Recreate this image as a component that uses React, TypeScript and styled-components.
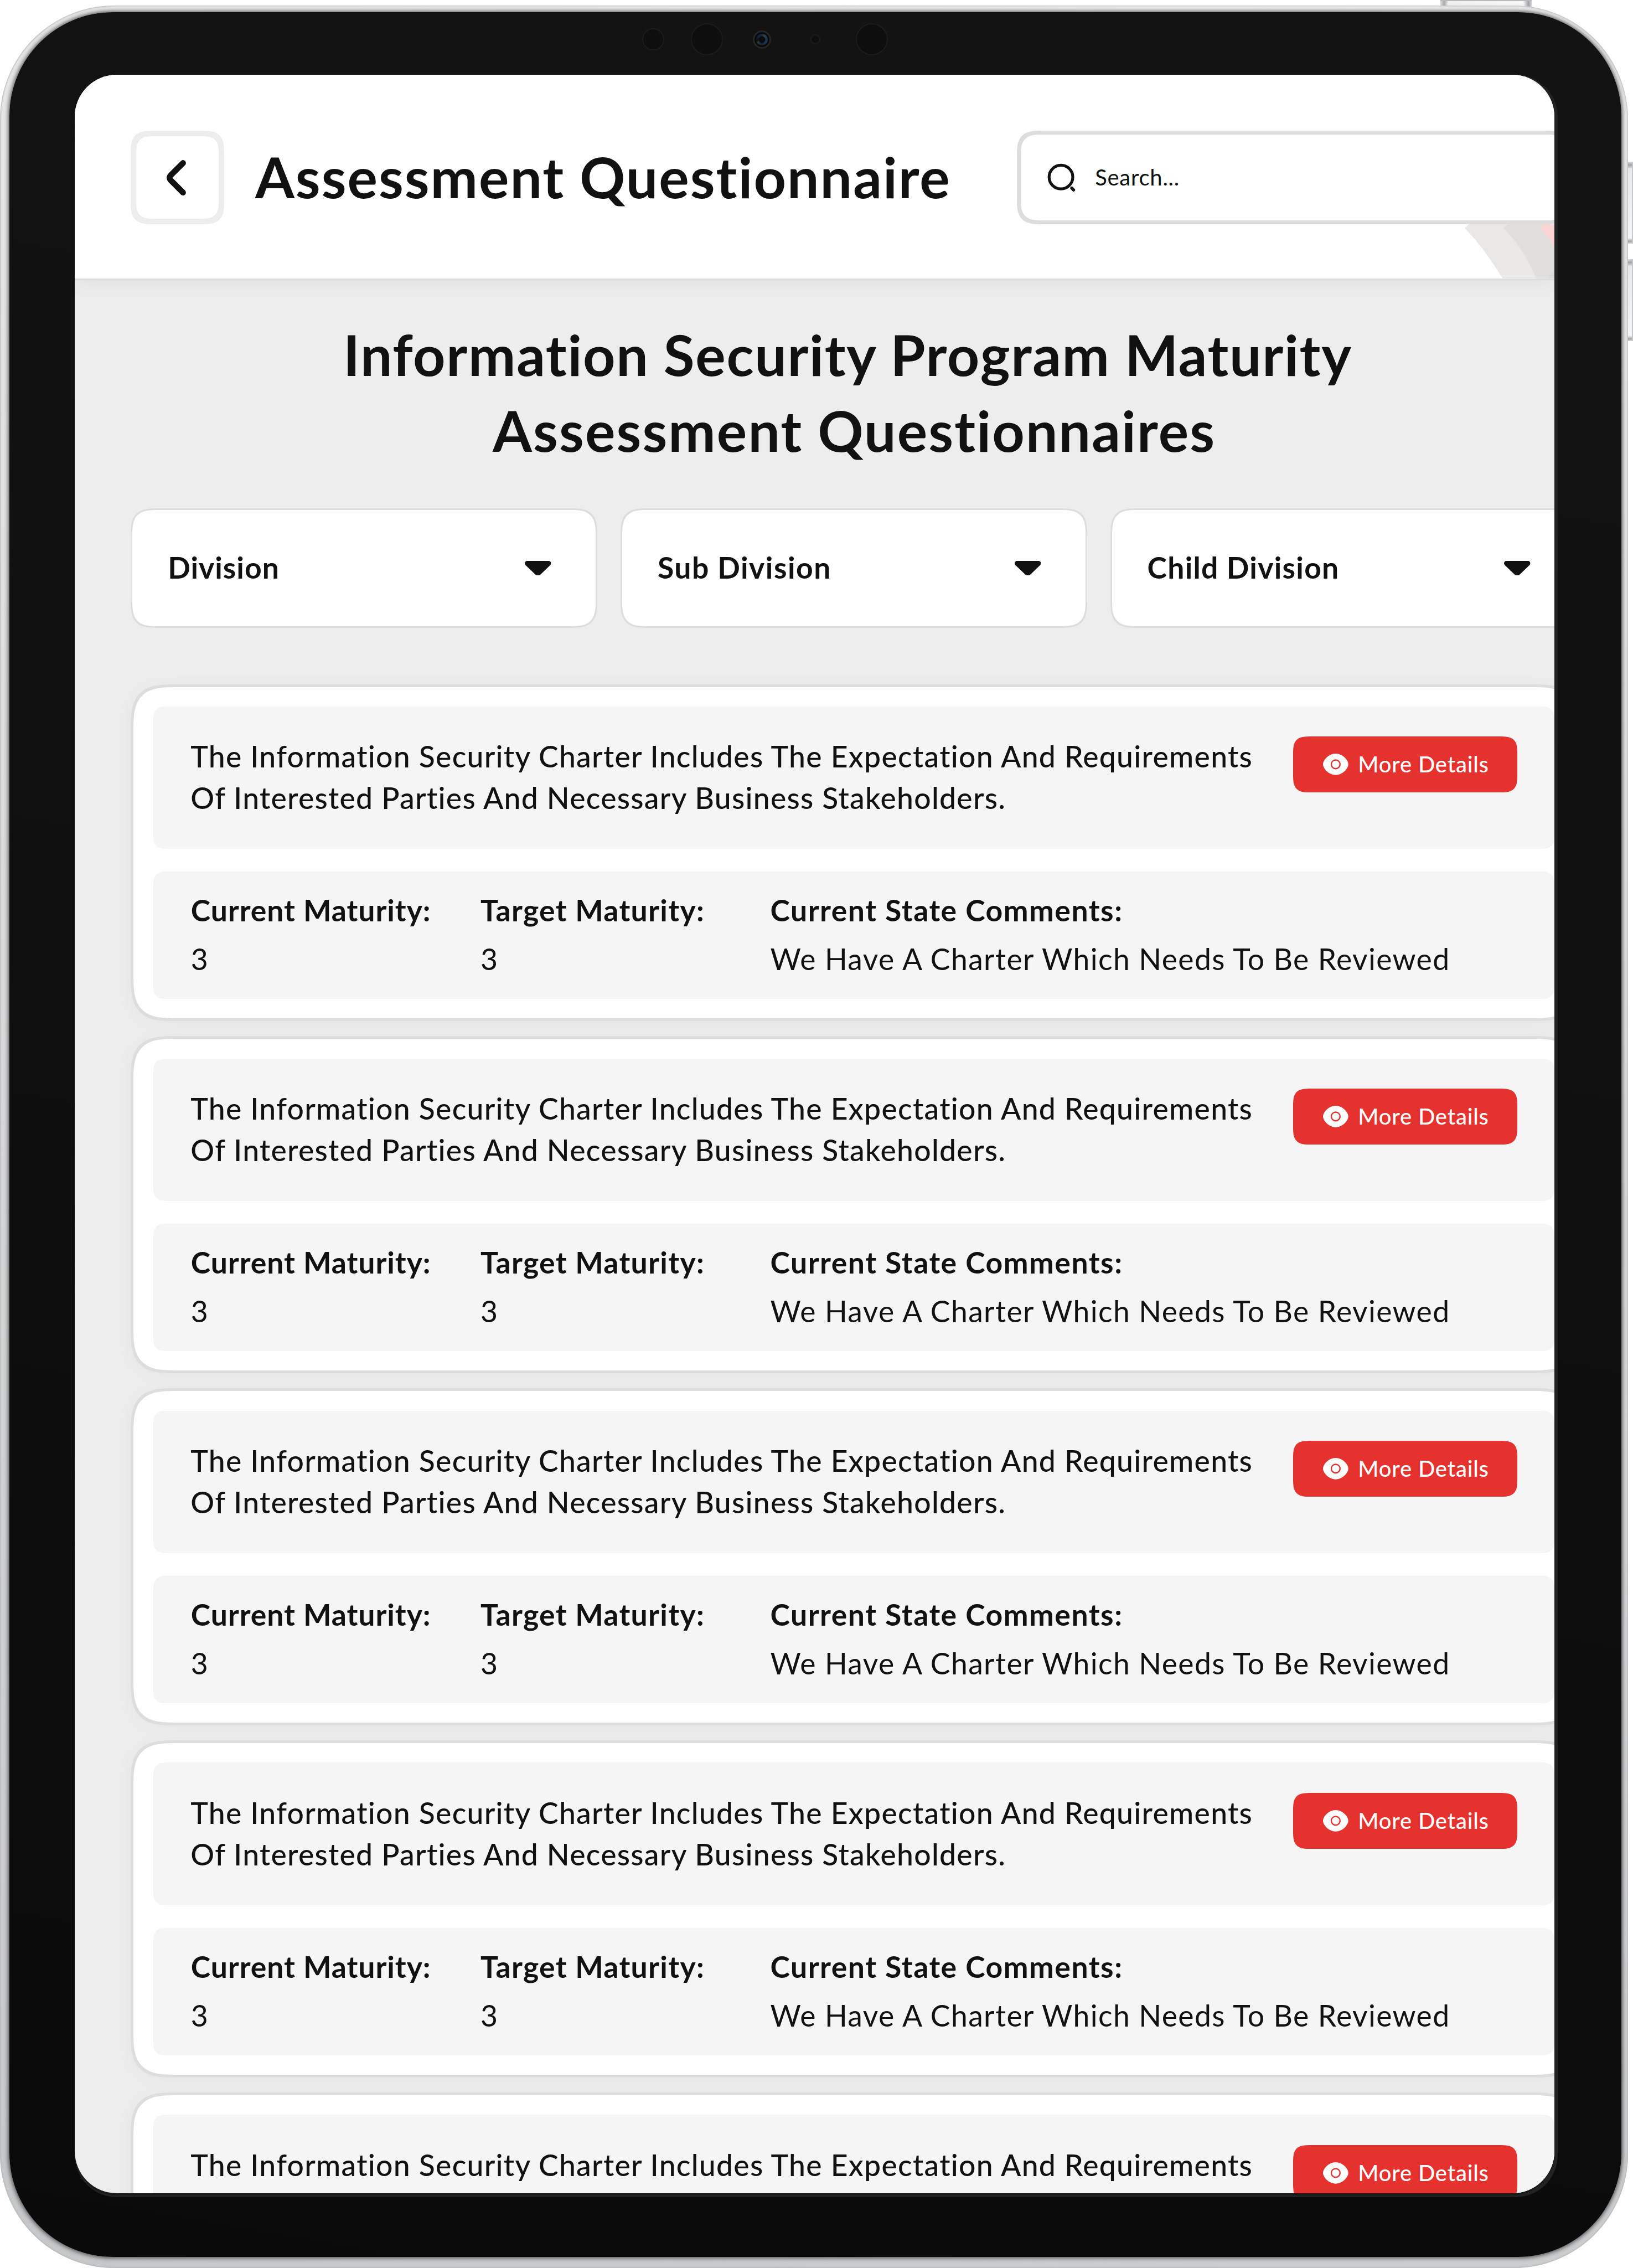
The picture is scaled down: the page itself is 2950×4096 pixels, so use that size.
import React from 'react';
import styled, { createGlobalStyle } from 'styled-components';

const ink = '#111111';
const line = '#dddddd';

const GlobalStyle = createGlobalStyle`
  *, *::before, *::after { box-sizing: border-box; }
  body { margin: 0; background: #ffffff; }
  h1, h2, p, dl, dt, dd { margin: 0; }
`;

/* ---------- device ---------- */

const Page = styled.div`
  position: relative;
  width: 2950px;
  height: 4096px;
  padding-top: 9.5px;
  overflow: hidden;
  background: #ffffff;
  color: ${ink};
  font-family: Lato, 'Noto Sans', sans-serif;
`;

const Rim = styled.div`
  position: relative;
  width: 2941px;
  height: 4086px;
  padding: 12.8px 12.4px 19.6px 17px;
  border-radius: 206px;
  background: linear-gradient(195deg, #efefef 0%, #e4e4e4 30%, #d4d5d6 65%, #c6c7c9 100%);
  box-shadow: inset 0 0 3px 1px #b4b4b4;
`;

const Bezel = styled.div`
  position: relative;
  height: 100%;
  padding: 112.5px 0 0 117.8px;
  border-radius: 187px;
  background: linear-gradient(190deg, #131313 0%, #101010 35%, #0a0a0a 100%);
  box-shadow: 0 0 8px 1px rgba(0, 0, 0, 0.75);
`;

const TopButton = styled.div`
  position: absolute;
  left: 2601.5px;
  top: 0;
  width: 165px;
  height: 12px;
  border-top: 2px solid #b9babd;
  background: linear-gradient(90deg, #dddddd 0, #a8a9ac 7px, #ededee 14px, #f4f4f4 150px, #a0a1a4 159px, #d5d5d5 100%);
`;

const SideButton = styled.div<{ $top: number }>`
  position: absolute;
  left: 2940px;
  top: ${(p) => p.$top}px;
  width: 10px;
  height: 148px;
  border-right: 2px solid #c6c7c9;
  background: linear-gradient(180deg, #dddddd 0, #9fa1a4 6px, #e8e8e9 13px, #f4f4f5 138px, #9fa1a4 144px, #dddddd 100%);
`;

const Sensor = styled.span<{ $x: number; $size: number }>`
  position: absolute;
  left: ${(p) => p.$x - 17 - p.$size / 2}px;
  top: ${(p) => 49 - p.$size / 2}px;
  width: ${(p) => p.$size}px;
  height: ${(p) => p.$size}px;
  border: 2px solid #1b1b1b;
  border-radius: 50%;
  background: #0e0e0e;
`;

const Lens = styled(Sensor)`
  display: grid;
  place-items: center;
  border: 3px solid #262626;
  background: #090a0a;

  &::before {
    content: '';
    width: 21px;
    height: 21px;
    border-radius: 50%;
    background:
      radial-gradient(circle, #0a0b0d 0 5.5px, transparent 6.5px),
      conic-gradient(#14263b 0deg, #3a4048 35deg, #1f3a56 60deg, #1c3450 130deg, #10223a 190deg, #33373a 235deg, #0b0f16 260deg, #14263f 320deg, #14263b 360deg);
  }
`;

const Ring = styled.div`
  width: 2678.8px;
  height: 3833.5px;
  border-radius: 76px;
  background: #222222;
`;

const Screen = styled.main`
  width: 2673px;
  height: 3826px;
  overflow: hidden;
  border-radius: 76px;
  background: #ededed;
  box-shadow: 0 3.6px 0 #161a19;
`;

/* ---------- header ---------- */

const Header = styled.header`
  position: relative;
  display: flex;
  align-items: flex-start;
  height: 371px;
  padding: 101.5px 0 0 101.4px;
  border-bottom: 3px solid ${line};
  background: #ffffff;
  box-shadow: 0 6px 34px rgba(0, 0, 0, 0.06);
`;

const BackButton = styled.button`
  display: grid;
  place-items: center;
  flex: none;
  width: 168.8px;
  height: 168.8px;
  padding: 0;
  border: 10px solid #ededed;
  border-radius: 44px;
  corner-shape: superellipse(1.7);
  background: #ffffff;
`;

const ChevronIcon = styled.svg`
  display: block;
  width: 36px;
  height: 66px;
  margin-right: 4.5px;
`;

const Title = styled.h1`
  flex: none;
  width: 1375.7px;
  margin-left: 56px;
  padding-top: 22.2px;
  font-size: 102px;
  font-weight: 700;
  line-height: 122.4px;
  letter-spacing: 2px;
  white-space: nowrap;
`;

const SearchBox = styled.label`
  position: relative;
  z-index: 1;
  display: flex;
  align-items: center;
  flex: none;
  width: 1000px;
  height: 169px;
  padding-left: 47px;
  border: 7px solid ${line};
  border-radius: 48px;
  corner-shape: superellipse(1.7);
  background: #ffffff;
`;

const SearchIcon = styled.svg`
  display: block;
  width: 54px;
  height: 56px;
`;

const SearchText = styled.span`
  margin-left: 33.5px;
  padding-bottom: 1px;
  font-size: 40px;
  line-height: 48px;
  letter-spacing: 0.75px;
`;

const Arches = styled.svg`
  position: absolute;
  left: 2511.2px;
  top: 270.4px;
  width: 161.8px;
  height: 97.6px;
`;

/* ---------- content ---------- */

const Content = styled.section`
  display: flex;
  flex-direction: column;
  width: 2715.4px;
  padding: 64.8px 0 0 101.4px;
`;

const Heading = styled.h2`
  height: 272.6px;
  font-size: 102px;
  font-weight: 700;
  line-height: 137px;
  text-align: center;
`;

const HeadingLine = styled.span<{ $tracking: number }>`
  display: block;
  letter-spacing: ${(p) => p.$tracking}px;
  white-space: pre;
`;

const Filters = styled.div`
  display: flex;
  gap: 41.4px;
  margin-top: 75px;
`;

const Filter = styled.button`
  display: flex;
  align-items: center;
  justify-content: space-between;
  flex: none;
  width: 843.3px;
  height: 215.8px;
  padding: 0 81px 0 64px;
  border: 3px solid ${line};
  border-radius: 52px;
  corner-shape: superellipse(1.7);
  background: #ffffff;
  color: ${ink};
  font-family: inherit;
`;

const FilterLabel = styled.span<{ $tracking: number }>`
  padding-bottom: 4px;
  font-size: 53.5px;
  font-weight: 700;
  line-height: 64px;
  letter-spacing: ${(p) => p.$tracking}px;
`;

const CaretIcon = styled.svg`
  display: block;
  width: 47.5px;
  height: 26.5px;
`;

const CardList = styled.div`
  display: flex;
  flex-direction: column;
  gap: 27px;
  margin-top: 101.6px;
`;

const Card = styled.article`
  display: flex;
  flex-direction: column;
  gap: 41px;
  flex: none;
  height: 608.9px;
  padding: 35.2px 35.5px 0;
  border: 5px solid ${line};
  border-radius: 86px;
  corner-shape: superellipse(1.7);
  background: #ffffff;
  box-shadow: 0 4px 34px rgba(0, 0, 0, 0.04);
`;

const Panel = styled.div`
  flex: none;
  width: 2531px;
  border-radius: 25px;
  corner-shape: superellipse(1.5);
  background: #f5f5f5;
`;

const QuestionPanel = styled(Panel)`
  display: flex;
  align-items: flex-start;
  justify-content: space-between;
  height: 257.7px;
  padding: 0 67px 0 67.5px;
`;

const Question = styled.p`
  width: 1965px;
  padding-top: 52.6px;
  font-size: 53.5px;
  font-weight: 500;
  line-height: 74.9px;
  letter-spacing: 1.27px;
`;

const DetailsButton = styled.button`
  display: flex;
  align-items: center;
  flex: none;
  width: 405.2px;
  height: 100.7px;
  margin-top: 54.5px;
  padding: 0 0 0 54.6px;
  border: 0;
  border-radius: 33px;
  corner-shape: superellipse(1.7);
  background: #e5322f;
  color: #ffffff;
  font-family: inherit;
`;

const EyeIcon = styled.svg`
  display: block;
  width: 45.7px;
  height: 38.7px;
`;

const DetailsText = styled.span`
  margin-left: 17.5px;
  padding-bottom: 1px;
  font-size: 40px;
  font-weight: 500;
  line-height: 48px;
  letter-spacing: 0.8px;
`;

const FactsPanel = styled(Panel)`
  height: 229.5px;
  padding: 24.4px 0 0 68px;
`;

const Facts = styled.dl`
  display: grid;
  grid-template-columns: 523.4px 523.4px 1fr;
  font-size: 53.5px;
  line-height: 88.3px;
  white-space: nowrap;
`;

const FactName = styled.dt<{ $tracking: number }>`
  font-weight: 700;
  letter-spacing: ${(p) => p.$tracking}px;
`;

const FactValue = styled.dd`
  font-weight: 400;
  letter-spacing: 1.38px;
`;

/* ---------- data ---------- */

const filters = [
  { name: 'Division', tracking: 1 },
  { name: 'Sub Division', tracking: 1.5 },
  { name: 'Child Division', tracking: 1.25 },
];

const record = {
  question:
    'The Information Security Charter Includes The Expectation And Requirements Of Interested Parties And Necessary Business Stakeholders.',
  facts: [
    { name: 'Current Maturity:', value: '3', tracking: 0.95 },
    { name: 'Target Maturity:', value: '3', tracking: 1.3 },
    { name: 'Current State Comments:', value: 'We Have A Charter Which Needs To Be Reviewed', tracking: 1.5 },
  ],
};

const records = Array.from({ length: 5 }, (_, id) => ({ id, ...record }));

function QuestionCard({ question, facts }: typeof record) {
  return (
    <Card>
      <QuestionPanel>
        <Question>{question}</Question>
        <DetailsButton>
          <EyeIcon viewBox="0 0 45.7 38.7">
            <path
              d="M0 19.35C0 12 10 0 22.85 0S45.7 12 45.7 19.35S35.7 38.7 22.85 38.7S0 26.7 0 19.35Z"
              fill="#fff"
            />
            <circle cx="22.85" cy="19.35" r="7.9" fill="none" stroke="#e5322f" strokeWidth="2.4" />
          </EyeIcon>
          <DetailsText>More Details</DetailsText>
        </DetailsButton>
      </QuestionPanel>
      <FactsPanel>
        <Facts>
          {facts.map((fact) => (
            <div key={fact.name}>
              <FactName $tracking={fact.tracking}>{fact.name}</FactName>
              <FactValue>{fact.value}</FactValue>
            </div>
          ))}
        </Facts>
      </FactsPanel>
    </Card>
  );
}

export default function App() {
  return (
    <>
      <GlobalStyle />
      <Page>
        <TopButton />
        <SideButton $top={292} />
        <SideButton $top={468} />
        <Rim>
          <Bezel>
            <Sensor $x={1180} $size={40} />
            <Sensor $x={1277} $size={58} />
            <Lens $x={1376} $size={33} />
            <Sensor $x={1473} $size={18} />
            <Sensor $x={1574.5} $size={58} />
            <Ring>
              <Screen>
                <Header>
                  <Arches viewBox="0 0 161.8 97.6">
                    <path d="M0 7.2L7.8 0H161.8V97.6H68.3C50 68 27 34 0 7.2Z" fill="#e9e8e6" />
                    <path d="M69.6 7.2L77.3 0H161.8V97.6H128.9C116 66 97 33 69.6 7.2Z" fill="#e0dfdd" />
                    <path d="M150.8 97.6L161.8 81V97.6Z" fill="#dcdbd9" />
                    <path d="M136.8 7.2L143.3 0H161.8V41C155 28 147 17 136.8 7.2Z" fill="#fbd5d5" />
                  </Arches>
                  <BackButton aria-label="Back">
                    <ChevronIcon viewBox="0 0 36 66">
                      <path
                        d="M30.6 6.4L8.4 28.6Q4.2 33 8.4 37.6L30.6 59.8"
                        fill="none"
                        stroke={ink}
                        strokeWidth="10.6"
                        strokeLinecap="round"
                        strokeLinejoin="round"
                      />
                    </ChevronIcon>
                  </BackButton>
                  <Title>Assessment Questionnaire</Title>
                  <SearchBox>
                    <SearchIcon viewBox="0 0 54 56">
                      <circle cx="25.6" cy="26.8" r="21.4" fill="none" stroke={ink} strokeWidth="5.2" />
                      <path d="M45.2 46.8L48.4 50" stroke={ink} strokeWidth="5.6" strokeLinecap="round" />
                    </SearchIcon>
                    <SearchText>Search...</SearchText>
                  </SearchBox>
                </Header>
                <Content>
                  <Heading>
                    <HeadingLine $tracking={1.65}>{'Information Security Program Maturity '}</HeadingLine>
                    <HeadingLine $tracking={2.1}>Assessment Questionnaires</HeadingLine>
                  </Heading>
                  <Filters>
                    {filters.map(({ name, tracking }) => (
                      <Filter key={name}>
                        <FilterLabel $tracking={tracking}>{name}</FilterLabel>
                        <CaretIcon viewBox="0 0 47.5 26.5">
                          <path
                            d="M4.4 0H43.1C47 0 48.8 4.2 46.2 7.4L29 24Q23.75 29 18.5 24L1.3 7.4C-1.3 4.2 .5 0 4.4 0Z"
                            fill={ink}
                          />
                        </CaretIcon>
                      </Filter>
                    ))}
                  </Filters>
                  <CardList>
                    {records.map(({ id, ...rest }) => (
                      <QuestionCard key={id} {...rest} />
                    ))}
                  </CardList>
                </Content>
              </Screen>
            </Ring>
          </Bezel>
        </Rim>
      </Page>
    </>
  );
}
